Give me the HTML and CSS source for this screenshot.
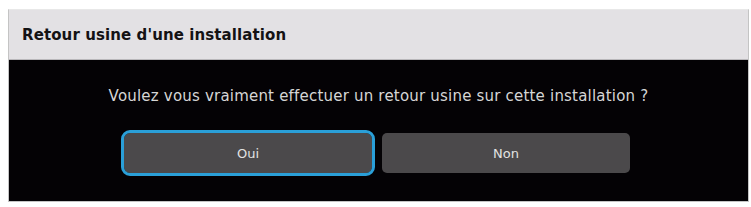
FILE: index.html
```html
<!DOCTYPE html>
<html lang="fr">
<head>
  <meta charset="UTF-8">
  <title>Retour usine</title>
  <link rel="stylesheet" href="styles.css">
</head>
<body>
  <div class="dialog">
    <div class="dialog-header">Retour usine d'une installation</div>
    <div class="dialog-body">
      <div class="message">Voulez vous vraiment effectuer un retour usine sur cette installation ?</div>
      <div class="actions">
        <button class="btn btn-focus">Oui</button>
        <button class="btn">Non</button>
      </div>
    </div>
  </div>
</body>
</html>
```

FILE: styles.css
```css
/* Boîte de dialogue */
body {
  margin: 0;
  padding: 9px 0 0 8px;
  background-color: #fff;
  font-family: 'DejaVu Sans', sans-serif;
}
.dialog {
  width: 741px;
  box-sizing: border-box;
  border: 1px solid #c4c4c4;
  border-top-color: #e8e8e8;
}
.dialog-header {
  height: 49px;
  padding-left: 13px;
  display: flex;
  align-items: center;
  background-color: #e3e1e4;
  border-bottom: 1px solid #b9b7ba;
  font-weight: bold;
  font-size: 15px;
  letter-spacing: 0.1px;
  color: #141214;
}
.dialog-body {
  background-color: #040205;
  padding: 26px 0 28px;
  text-align: center;
}
.message {
  font-size: 15px;
  line-height: 20px;
  letter-spacing: 0.2px;
  color: #d6d6d6;
  margin-bottom: 27px;
}
.actions {
  display: flex;
  justify-content: center;
  gap: 10px;
  padding-right: 3px;
}
.btn {
  width: 248px;
  height: 40px;
  border: none;
  border-radius: 5px;
  background-color: #4b494b;
  color: #e2e2e2;
  font-family: 'DejaVu Sans', sans-serif;
  font-size: 13px;
  cursor: pointer;
}
.btn-focus {
  outline: 3px solid #2a9fd8;
  border-radius: 6px;
}
```
